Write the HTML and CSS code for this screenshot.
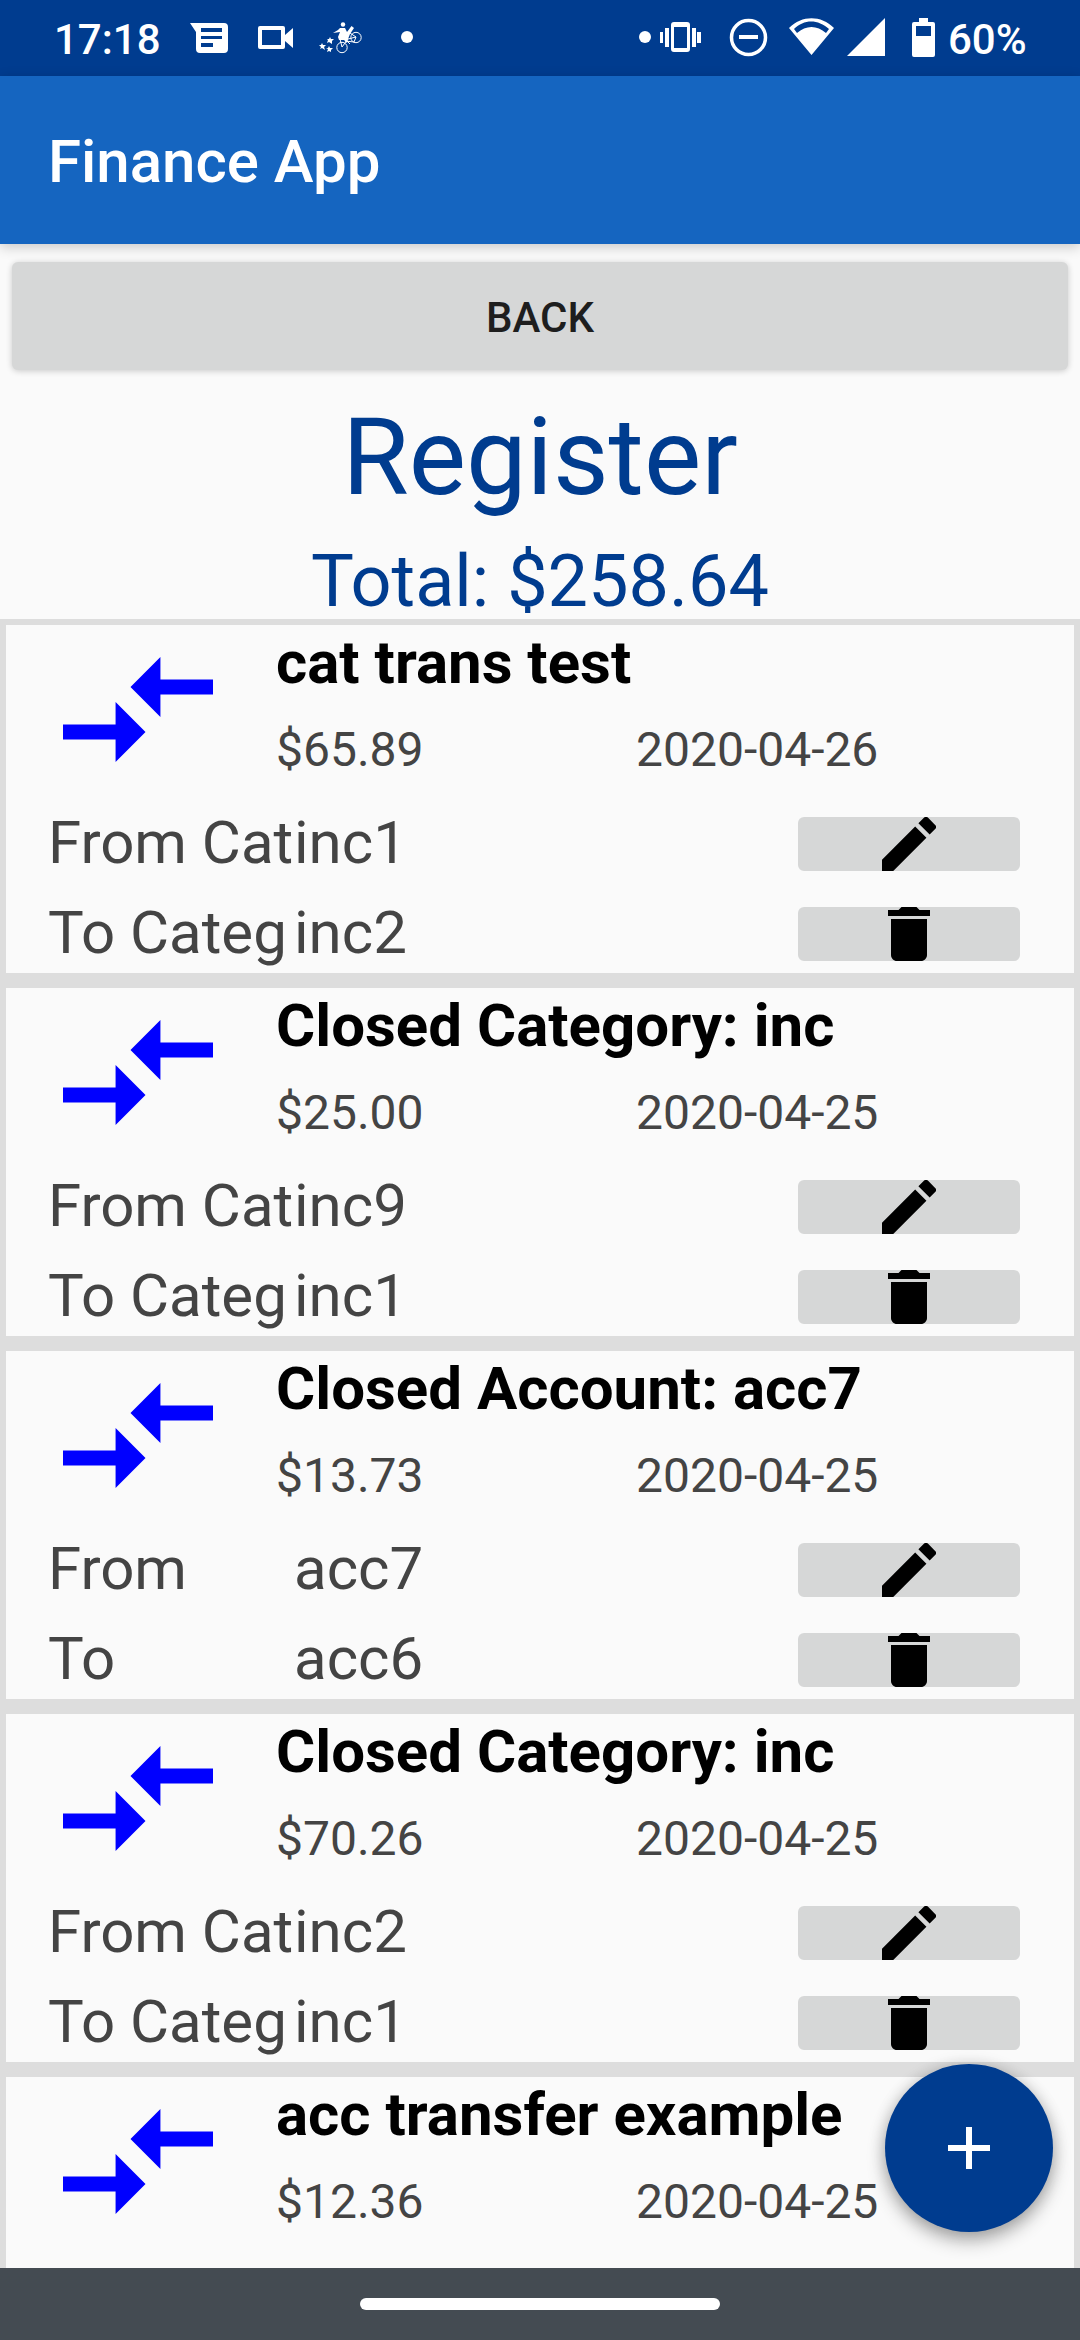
FILE: index.html
```html
<!DOCTYPE html>
<html lang="en">
<head>
<meta charset="utf-8">
<meta name="viewport" content="width=device-width, initial-scale=1">
<title>Finance App</title>
<link rel="stylesheet" href="styles.css">
</head>
<body>
<svg class="defs" aria-hidden="true">
  <symbol id="i-transfer" viewBox="2 5 20 14"><path d="M9.01 14H2v2h7.01v3L13 15l-3.99-4v3zm5.98-1v-3H22V8h-7.01V5L11 9l3.99 4z"/></symbol>
  <symbol id="i-edit" viewBox="3 3 18 18"><path d="M3 17.25V21h3.75L17.81 9.94l-3.75-3.75L3 17.25zM20.71 7.04a.996.996 0 0 0 0-1.41l-2.34-2.34a.996.996 0 0 0-1.41 0l-1.83 1.83 3.75 3.75 1.83-1.83z"/></symbol>
  <symbol id="i-delete" viewBox="3 3 18 18"><path d="M6 19c0 1.100.9 2 2 2h8c1.100 0 2-.9 2-2V7H6v12zM19 4h-3.500l-1-1h-5l-1 1H5v2h14V4z"/></symbol>
</svg>
<div class="screen">
  <header class="status">
    <span class="clock">17:18</span>
    <svg class="status-left" viewBox="184 0 236 76" aria-hidden="true">
      <path fill-rule="evenodd" d="M190 23h34a4 4 0 0 1 4 4v22a4 4 0 0 1-4 4h-24a4 4 0 0 1-4-4V32zM201 28v4h21v-4zM201 36v3h21v-3zM201 43v4h12v-4z"/>
      <path fill-rule="evenodd" d="M260 26h23a2 2 0 0 1 2 2v7l8-7v20l-8-7v6a2 2 0 0 1-2 2h-23a2 2 0 0 1-2-2V28a2 2 0 0 1 2-2zM262 30v15h19V30z"/>
      <g fill="none" stroke="#fff"><circle cx="342" cy="47.500" r="5.200"/><circle cx="356" cy="37.500" r="5.200"/><path d="M342 47l6-8 8-2M345 41l9 1 2-5M342 47l-2-8M350 44l-6-6M350 33l6 4"/></g>
      <circle cx="343" cy="24.500" r="2.200"/>
      <path d="M340 28l5 0 2 4 4.500-6 2.500 2-4 6-2 5-1 4-3-3-5 0-1-3 2-5-7 1 5-3z"/>
      <path d="M322 43l1 2 3 0-2 2 1 3-3-2-2 1 1-2-2-2h2zM330 37l1 2 3 0-2 2 0 3-3-2-2 1 1-3-1-1h2zM329 46l1 2 3 0-2 2 0 2-2-1-2 1 1-3-2-1h2z"/>
      <circle cx="407" cy="37" r="6"/>
    </svg>
    <svg class="status-right" viewBox="636 0 300 76" aria-hidden="true">
      <circle cx="645" cy="37" r="6"/>
      <path fill-rule="evenodd" d="M674 22h13a3 3 0 0 1 3 3v24a3 3 0 0 1-3 3h-13a3 3 0 0 1-3-3V25a3 3 0 0 1 3-3zM674 27v21h13V27z"/>
      <path d="M660 32h3v11h-3zM665 28h4v19h-4zM692 28h4v19h-4zM697 32h4v11h-4z"/>
      <circle cx="748.500" cy="37.500" r="17" fill="none" stroke="#fff" stroke-width="3.500"/>
      <path d="M739 35h19v4h-19z"/>
      <path fill-rule="evenodd" d="M789 28C802 15 821 15 834 28L811.500 55zM794 29l3 4C806 25 817 25 826 33l3-4C818 19 804 19 794 29z"/>
      <path d="M885 18v38h-38z"/>
      <path fill-rule="evenodd" d="M919 18h9v4h5a2 2 0 0 1 2 2v31a2 2 0 0 1-2 2h-19a2 2 0 0 1-2-2V24a2 2 0 0 1 2-2h5zM916 26v10h15V26z"/>
    </svg>
    <span class="battery">60%</span>
  </header>
  <div class="appbar"><h1>Finance App</h1></div>
  <main>
    <button class="back" type="button">BACK</button>
    <h2>Register</h2>
    <p class="total">Total: $258.64</p>
    <ul class="list">
      <li><article class="card">
        <svg class="transfer" aria-hidden="true"><use href="#i-transfer"/></svg>
        <h3>cat trans test</h3><span class="amount">$65.89</span><time>2020-04-26</time>
        <div class="row"><span class="label">From Cat</span><span class="value">inc1</span><button type="button" aria-label="Edit"><svg><use href="#i-edit"/></svg></button></div>
        <div class="row"><span class="label">To Categ</span><span class="value">inc2</span><button type="button" aria-label="Delete"><svg><use href="#i-delete"/></svg></button></div>
      </article></li>
      <li><article class="card">
        <svg class="transfer" aria-hidden="true"><use href="#i-transfer"/></svg>
        <h3>Closed Category: inc</h3><span class="amount">$25.00</span><time>2020-04-25</time>
        <div class="row"><span class="label">From Cat</span><span class="value">inc9</span><button type="button" aria-label="Edit"><svg><use href="#i-edit"/></svg></button></div>
        <div class="row"><span class="label">To Categ</span><span class="value">inc1</span><button type="button" aria-label="Delete"><svg><use href="#i-delete"/></svg></button></div>
      </article></li>
      <li><article class="card">
        <svg class="transfer" aria-hidden="true"><use href="#i-transfer"/></svg>
        <h3>Closed Account: acc7</h3><span class="amount">$13.73</span><time>2020-04-25</time>
        <div class="row"><span class="label">From</span><span class="value">acc7</span><button type="button" aria-label="Edit"><svg><use href="#i-edit"/></svg></button></div>
        <div class="row"><span class="label">To</span><span class="value">acc6</span><button type="button" aria-label="Delete"><svg><use href="#i-delete"/></svg></button></div>
      </article></li>
      <li><article class="card">
        <svg class="transfer" aria-hidden="true"><use href="#i-transfer"/></svg>
        <h3>Closed Category: inc</h3><span class="amount">$70.26</span><time>2020-04-25</time>
        <div class="row"><span class="label">From Cat</span><span class="value">inc2</span><button type="button" aria-label="Edit"><svg><use href="#i-edit"/></svg></button></div>
        <div class="row"><span class="label">To Categ</span><span class="value">inc1</span><button type="button" aria-label="Delete"><svg><use href="#i-delete"/></svg></button></div>
      </article></li>
      <li><article class="card">
        <svg class="transfer" aria-hidden="true"><use href="#i-transfer"/></svg>
        <h3>acc transfer example</h3><span class="amount">$12.36</span><time>2020-04-25</time>
      </article></li>
    </ul>
    <button class="fab" type="button" aria-label="Add transaction"><svg viewBox="0 0 14 14"><path d="M6 0h2v6h6v2H8v6H6V8H0V6h6z"/></svg></button>
  </main>
  <footer class="nav"><span class="handle"></span></footer>
</div>
</body>
</html>
```
FILE: styles.css
```css
* { box-sizing: border-box; }
body, h1, h2, h3, p, ul { margin: 0; padding: 0; }
body { font-family: Roboto, sans-serif; background: #fafafa; }
button { border: 0; padding: 0; font-family: inherit; background: #d6d7d7; display: flex; align-items: center; justify-content: center; }
svg { display: block; flex: none; }
.defs { position: absolute; width: 0; height: 0; }
.screen { height: 100vh; display: flex; flex-direction: column; overflow: hidden; }

.status { flex: none; height: 76px; padding: 0 54px; display: flex; align-items: center; background: #003c8f; color: #fff; fill: #fff; font-size: 42px; font-weight: 500; line-height: 72px; white-space: nowrap; }
.clock { width: 130px; padding-top: 3px; }
.status-left { width: 236px; height: 76px; }
.status-right { width: 300px; height: 76px; margin-left: auto; }
.battery { width: 90px; padding: 3px 0 0 12px; }

.appbar { flex: none; position: relative; z-index: 1; height: 168px; padding: 3px 48px 0; display: flex; align-items: center; background: #1565c0; color: #fff; box-shadow: 0 3px 12px rgba(0, 0, 0, .2); }
.appbar h1 { font-size: 60px; font-weight: 500; line-height: 72px; }

main { flex: 1; min-height: 0; position: relative; display: flex; flex-direction: column; overflow: hidden; }
.back { flex: none; height: 108px; margin: 18px 12px; padding-top: 3px; border-radius: 6px; color: #1e1e1e; font-size: 42px; font-weight: 500; line-height: 48px; box-shadow: 0 1px 6px rgba(0, 0, 0, .2); }
h2 { color: #003c8f; font-size: 108px; font-weight: 400; line-height: 138px; text-align: center; }
.total { padding-top: 18px; color: #003c8f; font-size: 72px; line-height: 75px; text-align: center; }

.list { flex: none; list-style: none; background: #ddd; }
.list li { padding: 6px; margin-bottom: 3px; }
.card { height: 348px; padding: 0 54px 0 42px; display: grid; grid-template-columns: 228px 360px 1fr; grid-template-rows: 76px 98px 90px 90px; background: #fafafa; }
.transfer { grid-row: 1 / 3; width: 150px; height: 105px; margin: 32px 0 0 15px; fill: #00f; }
h3 { grid-column: 2 / 4; color: #000; font-size: 60px; font-weight: 700; line-height: 75px; white-space: nowrap; }
.amount, time { color: #444; font-size: 48px; line-height: 98px; }
.row { grid-column: 1 / 4; display: flex; align-items: center; color: #444; font-size: 60px; line-height: 87px; }
.label, .value { padding-bottom: 3px; }
.label { width: 246px; white-space: nowrap; overflow: hidden; }
.value { flex: 1; }
.row button { width: 222px; height: 54px; border-radius: 6px; }
.row button svg { width: 54px; height: 54px; }

.fab { position: absolute; right: 27px; bottom: 36px; width: 168px; height: 168px; border-radius: 50%; background: #003c8f; fill: #fff; box-shadow: 0 9px 18px rgba(0, 0, 0, .3), 0 0 15px rgba(0, 0, 0, .15); }
.fab svg { width: 42px; height: 42px; }
.nav { flex: none; position: relative; height: 72px; display: flex; align-items: center; justify-content: center; background: #444b52; }
.handle { width: 360px; height: 12px; border-radius: 6px; background: #fff; }
```
